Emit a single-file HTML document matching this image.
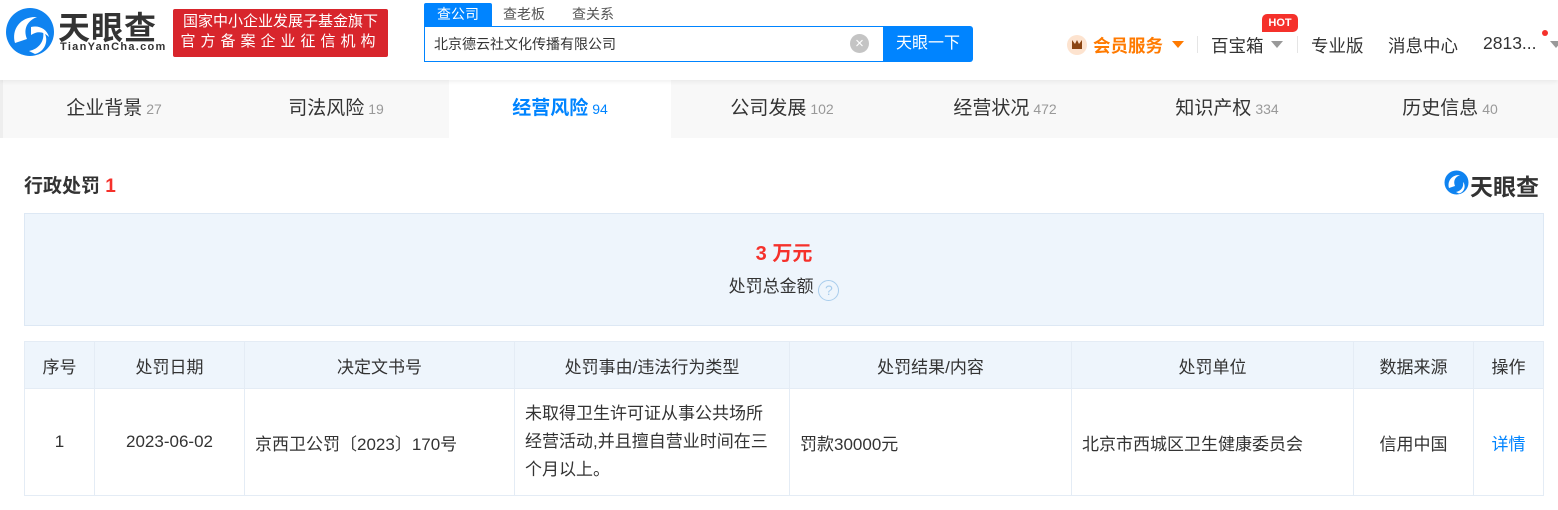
<!DOCTYPE html>
<html><head><meta charset="utf-8"><style>
*{margin:0;padding:0;box-sizing:border-box}
body{width:1558px;height:510px;overflow:hidden;background:#fff;font-family:"Liberation Sans","Noto Sans CJK SC",sans-serif;color:#333;position:relative}
.abs{position:absolute}
.hdr{left:0;top:0;width:1558px;height:80px;background:#fff;box-shadow:0 2px 4px rgba(0,0,0,.06);z-index:2}
.tabs{left:0;top:80px;width:1558px;height:58px;background:#f8f8f8;border-left:3px solid #eee}
.tab{position:absolute;top:0;height:58px;width:222px;text-align:center;line-height:58px;font-size:19px;color:#333}
.tab span{font-size:14px;color:#999;margin-left:4px}
.tab.on{background:#fff;color:#0084ff;font-weight:bold}
.tab.on span{color:#0084ff;font-weight:normal}
table{position:absolute;left:24px;top:341px;width:1520px;border-collapse:collapse;font-size:17px;color:#333;table-layout:fixed}
td,th{border:1px solid #e4ecf5;text-align:center;font-weight:normal}
th{background:#eef5fc;height:47px}
td{height:107px}
</style></head><body>
<div class="abs hdr">
  <svg class="abs" style="left:5px;top:7px" width="50" height="50" viewBox="0 0 50 50">
    <circle cx="25" cy="25" r="24" fill="#0f83f0"/>
    <path d="M10 36 C6 22 16 9 32 10 C22 14 18 22 22 32 Z" fill="#fff"/>
    <path d="M24 44 C34 42 40 34 38 24 C44 30 42 44 30 47 Z" fill="#fff"/>
    <path d="M26 20 C34 18 42 22 44 30 C38 24 32 24 26 28 Z" fill="#fff"/>
  </svg>
  <div class="abs" style="left:58px;top:3px;font-size:32px;font-weight:bold;color:#333;letter-spacing:1px">天眼查</div>
  <div class="abs" style="left:60px;top:41px;font-size:11px;color:#333;letter-spacing:1.3px;font-weight:bold">TianYanCha.com</div>
  <div class="abs" style="left:173px;top:9px;width:215px;height:48px;background:#d8252c;border-radius:2px;color:#fff;font-size:15px;text-align:center;line-height:20px;padding-top:3px">国家中小企业发展子基金旗下<br><span style="letter-spacing:5px">官方备案企业征信机构</span></div>
  <div class="abs" style="left:424px;top:3px;width:68px;height:23px;background:#0084ff;color:#fff;font-size:14px;text-align:center;line-height:22px;border-radius:2px 2px 0 0">查公司</div>
  <div class="abs" style="left:503px;top:4px;font-size:14px;color:#555">查老板</div>
  <div class="abs" style="left:572px;top:4px;font-size:14px;color:#555">查关系</div>
  <div class="abs" style="left:424px;top:26px;width:460px;height:36px;border:1px solid #0084ff;border-right:none;font-size:14px;line-height:34px;padding-left:9px;color:#333">北京德云社文化传播有限公司</div>
  <div class="abs" style="left:850px;top:34px;width:19px;height:19px;border-radius:50%;background:#c4c4c4;color:#fff;font-size:15px;line-height:19px;text-align:center">×</div>
  <div class="abs" style="left:883px;top:26px;width:90px;height:36px;background:#0084ff;color:#fff;font-size:16px;line-height:36px;text-align:center;border-radius:0 3px 3px 0">天眼一下</div>
  <div class="abs" style="left:1067px;top:35px;width:20px;height:20px;border-radius:50%;background:#fde3cf"></div>
  <div class="abs" style="left:1072px;top:40px;width:10px;height:9px;background:#8b4513;clip-path:polygon(0 0,30% 45%,50% 0,70% 45%,100% 0,100% 100%,0 100%)"></div>
  <div class="abs" style="left:1093px;top:33px;font-size:17.5px;font-weight:bold;color:#ff7a00">会员服务</div>
  <div class="abs" style="left:1172px;top:41px;border:6px solid transparent;border-top:7px solid #ff7a00;border-bottom:none"></div>
  <div class="abs" style="left:1197px;top:36px;width:1px;height:17px;background:#e5e5e5"></div>
  <div class="abs" style="left:1211px;top:33px;font-size:17.5px;color:#333">百宝箱</div>
  <div class="abs" style="left:1271px;top:41px;border:6px solid transparent;border-top:7px solid #999;border-bottom:none"></div>
  <div class="abs" style="left:1262px;top:14px;width:36px;height:18px;background:#f5312b;border-radius:5px 5px 5px 0;color:#fff;font-size:11px;font-weight:bold;text-align:center;line-height:18px">HOT</div>
  <div class="abs" style="left:1297px;top:36px;width:1px;height:17px;background:#e5e5e5"></div>
  <div class="abs" style="left:1311px;top:33px;font-size:17.5px;color:#333">专业版</div>
  <div class="abs" style="left:1388px;top:33px;font-size:17.5px;color:#333">消息中心</div>
  <div class="abs" style="left:1483px;top:33px;font-size:17.5px;color:#333">2813...</div>
  <div class="abs" style="left:1542px;top:30px;width:6px;height:6px;border-radius:50%;background:#f5312b"></div>
  <div class="abs" style="left:1550px;top:41px;border:6px solid transparent;border-top:7px solid #999;border-bottom:none"></div>
</div>
<div class="abs tabs">
  <div class="tab" style="left:0">企业背景<span>27</span></div>
  <div class="tab" style="left:222px">司法风险<span>19</span></div>
  <div class="tab on" style="left:446px;width:222px">经营风险<span>94</span></div>
  <div class="tab" style="left:668px">公司发展<span>102</span></div>
  <div class="tab" style="left:891px">经营状况<span>472</span></div>
  <div class="tab" style="left:1113px">知识产权<span>334</span></div>
  <div class="tab" style="left:1336px">历史信息<span>40</span></div>
</div>
<div class="abs" style="left:24px;top:171px;font-size:19px;font-weight:bold;color:#333">行政处罚 <span style="color:#f5312b">1</span></div>
<svg class="abs" style="left:1444px;top:170px" width="25" height="25" viewBox="0 0 50 50">
  <circle cx="25" cy="25" r="24" fill="#0f83f0"/>
  <path d="M10 36 C6 22 16 9 32 10 C22 14 18 22 22 32 Z" fill="#fff"/>
  <path d="M24 44 C34 42 40 34 38 24 C44 30 42 44 30 47 Z" fill="#fff"/>
</svg>
<div class="abs" style="left:1470px;top:168px;font-size:23px;font-weight:bold;color:#333">天眼查</div>
<div class="abs" style="left:24px;top:213px;width:1520px;height:113px;background:#eef5fc;border:1px solid #dde8f4">
  <div style="text-align:center;margin-top:23px;font-size:20px;font-weight:bold;color:#f5312b">3 万元</div>
  <div style="text-align:center;margin-top:6px;font-size:17px;color:#333">处罚总金额 <span style="display:inline-block;width:21px;height:21px;border:1.5px solid #a9cdec;border-radius:50%;color:#a9cdec;font-size:14px;line-height:18px;text-align:center;vertical-align:-3px">?</span></div>
</div>
<table>
<tr><th style="width:70px">序号</th><th style="width:150px">处罚日期</th><th style="width:270px">决定文书号</th><th style="width:275px">处罚事由/违法行为类型</th><th style="width:282px">处罚结果/内容</th><th style="width:282px">处罚单位</th><th style="width:120px">数据来源</th><th>操作</th></tr>
<tr><td>1</td><td>2023-06-02</td><td style="text-align:left;padding-left:10px">京西卫公罚〔2023〕170号</td><td style="text-align:left;padding:0 10px;line-height:28px">未取得卫生许可证从事公共场所经营活动,并且擅自营业时间在三个月以上。</td><td style="text-align:left;padding-left:10px">罚款30000元</td><td style="text-align:left;padding-left:10px">北京市西城区卫生健康委员会</td><td>信用中国</td><td style="color:#0084ff">详情</td></tr>
</table>
</body></html>
